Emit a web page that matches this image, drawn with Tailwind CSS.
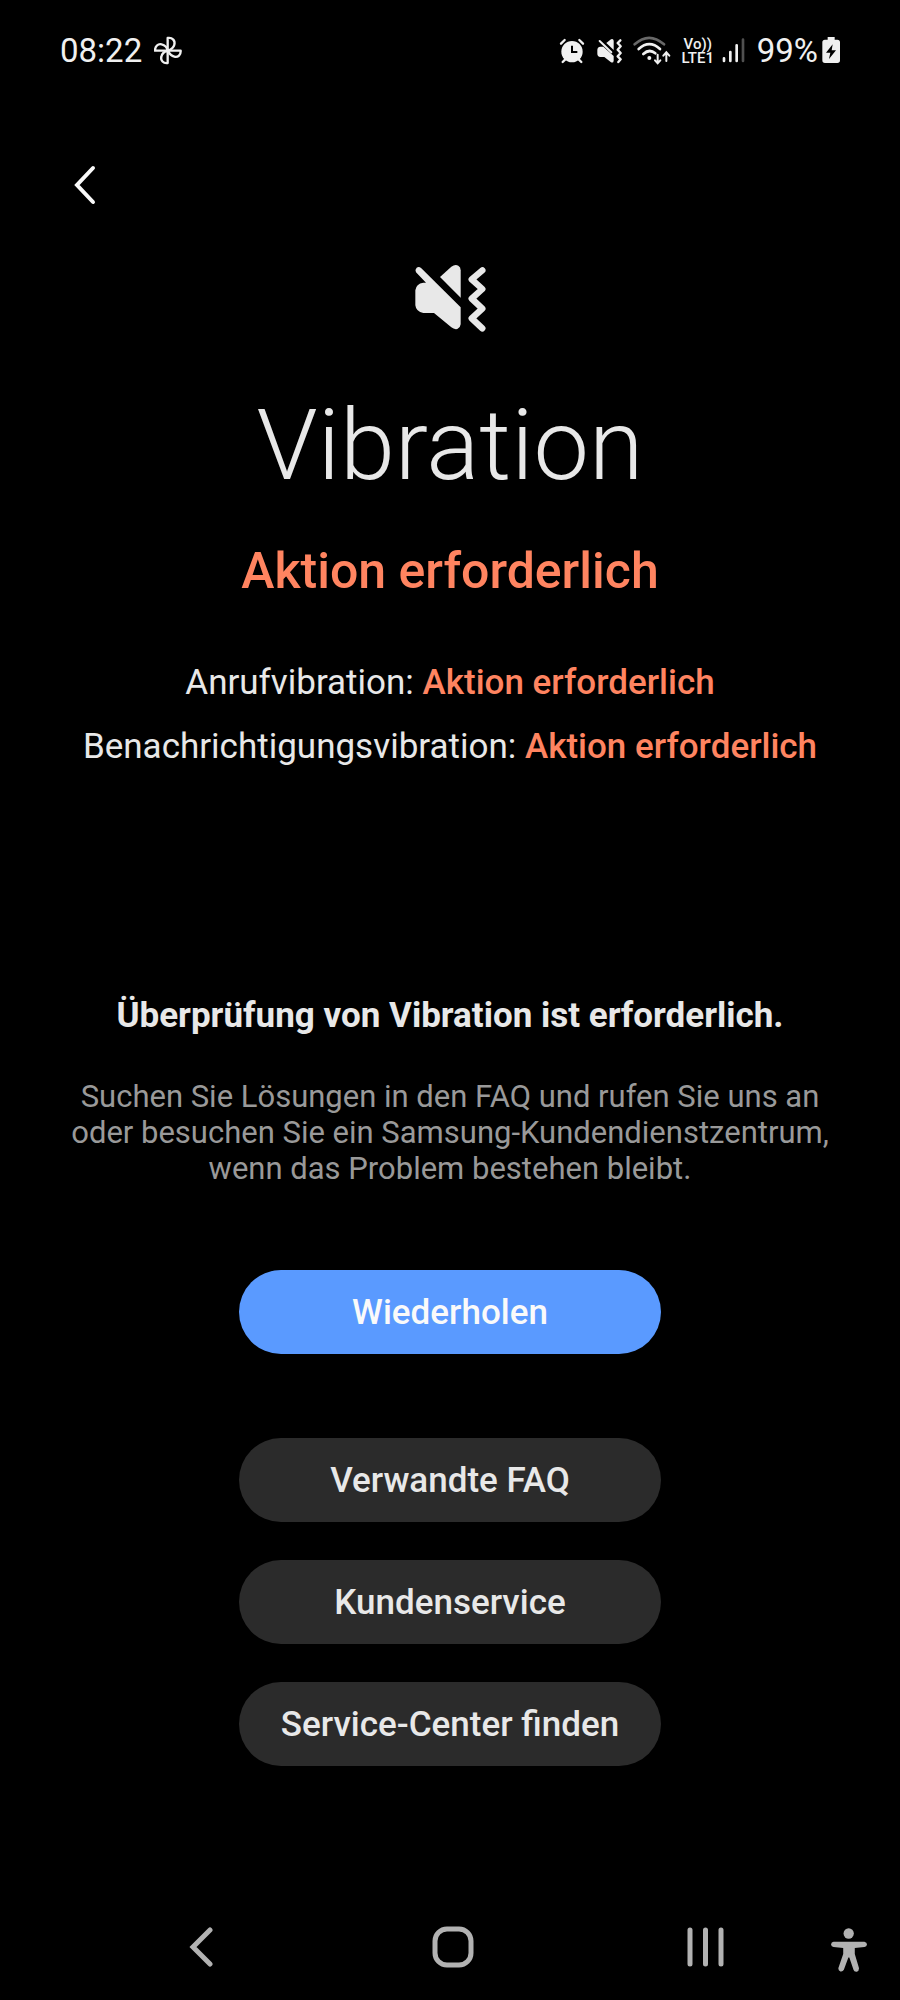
<!DOCTYPE html>
<html lang="de">
 <head>
  <meta charset="utf-8"/>
  <meta content="width=device-width, initial-scale=1.0" name="viewport"/>
  <title>
Vibration
  </title>
  <script src="https://cdn.jsdelivr.net/npm/@tailwindcss/browser@4"></script>
 </head>
 <body class="min-h-screen flex flex-col bg-black text-[#e8e8e8] font-[Roboto,sans-serif]">
  <!-- Status bar -->
  <div class="h-[102px] flex items-center justify-between px-[60px] text-[33px] leading-10 text-[#f0f0f0]">
   <div class="flex items-center gap-3">
    <span>08:22</span>
    <svg class="w-7 h-[30px]" fill="none" stroke="currentColor" stroke-linejoin="round" stroke-width="7" viewBox="342 48 84 90">
     <path d="M383 92V54C398 52 406 62 403 74C401 82 394 88 383 92"/>
     <path d="M383 92H422C423 104 414 113 403 110C394 108 388 101 383 92"/>
     <path d="M383 92V129C370 131 361 121 364 110C366 101 373 95 383 92"/>
     <path d="M383 92H345C345 79 354 70 365 73C375 75 381 82 383 92"/>
    </svg>
   </div>
   <div class="flex items-center">
    <svg class="w-[26px] h-[30px]" viewBox="57 48 78 90">
     <circle cx="96" cy="95" fill="currentColor" r="32"/>
     <path d="M63 71L74 60M129 71L118 60M68 126L76 118M124 126L116 118" fill="none" stroke="currentColor" stroke-linecap="round" stroke-width="7"/>
     <path d="M96 77V96H112" fill="none" stroke="#000" stroke-width="6"/>
    </svg>
    <svg class="ml-3 w-[25px] h-[30px]" viewBox="172 48 75 90">
     <path d="M200 69L214 58Q221 55 222 62V90Z" fill="currentColor"/>
     <path d="M182 80H191L222 108V122Q221 131 213 126L194 111H182Q173 110 173 101V90Q173 81 182 80Z" fill="currentColor"/>
     <path d="M180 63L215 97" stroke="currentColor" stroke-linecap="round" stroke-width="6"/>
     <path d="M242 61L234 69L243 79L234 89L243 99L234 109L243 118L236 126" fill="none" stroke="currentColor" stroke-linecap="round" stroke-linejoin="round" stroke-width="7"/>
    </svg>
    <svg class="ml-[11px] w-[39px] h-[30px]" fill="none" stroke="currentColor" stroke-linecap="round" stroke-width="8" viewBox="280 48 117 90">
     <path d="M285 73Q328 34 373 73" stroke="#686868"/>
     <path d="M297 87Q329 58 361 87"/>
     <path d="M311 102Q329 85 347 100"/>
     <circle cx="329" cy="114" fill="currentColor" r="6" stroke="none"/>
     <path d="M354 104V129M346 121L354 130L362 121M380 123V98M371 107L380 97L389 107" stroke-width="6"/>
    </svg>
    <div class="ml-2.5 w-8 flex flex-col items-center text-[15px] leading-[14px] font-medium">
     <span>Vo))</span>
     <span>LTE1</span>
    </div>
    <svg class="ml-2 w-6 h-[30px]" fill="none" stroke="currentColor" stroke-linecap="round" stroke-width="8" viewBox="94 48 72 90">
     <path d="M100 115V123M119 96V123M138 76V123"/>
     <path d="M157 59V123" stroke="#505050"/>
    </svg>
    <span class="ml-[11px]">99%</span>
    <svg class="ml-1 w-[18px] h-[30px]" viewBox="396 48 54 90">
     <path d="M413 51H434V59H442Q450 59 450 67V121Q450 129 442 129H405Q397 129 397 121V67Q397 59 405 59H413Z" fill="currentColor"/>
     <path d="M428 73L408 98H421L417 117L438 91H425Z" fill="#000"/>
    </svg>
   </div>
  </div>

  <header class="px-[58px] pt-14 pb-[52px]">
   <button aria-label="Zurück" class="flex items-center justify-center w-[54px] h-[54px]" type="button">
    <svg class="w-[22px] h-[40px]" fill="none" stroke="#fafafa" stroke-linecap="round" stroke-width="4" viewBox="0 0 22 40">
     <path d="M19 3L3 20L19 37"/>
    </svg>
   </button>
  </header>

  <main class="flex flex-col items-center px-4 text-center">
   <svg class="w-[72px] h-[72px]" viewBox="72 57 216 216">
    <path d="M150 96L184 65Q195 57 205 62Q212 66 212 76V158Z" fill="currentColor"/>
    <path d="M100 113H108L78 82Q74 74 80 68Q87 63 94 70L212 187V238Q211 248 202 252Q192 254 184 247L132 204H100Q78 200 76 181V136Q78 116 100 113Z" fill="currentColor"/>
    <path d="M277 76L245 103L277 132L245 161L277 191L245 220L277 250" fill="none" stroke="currentColor" stroke-linecap="round" stroke-linejoin="round" stroke-width="19"/>
   </svg>
   <h1 class="mt-[51px] text-[99px] leading-[116px] font-light">Vibration</h1>
   <p class="mt-[38px] text-[50px] leading-[60px] font-medium text-[#ff8460]">Aktion erforderlich</p>
   <div class="mt-[50px] text-[35px] leading-[64px]">
    <p>Anrufvibration: <span class="font-medium text-[#ff8460]">Aktion erforderlich</span></p>
    <p>Benachrichtigungsvibration: <span class="font-medium text-[#ff8460]">Aktion erforderlich</span></p>
   </div>
   <h2 class="mt-[217px] text-[35px] leading-10 font-bold">Überprüfung von Vibration ist erforderlich.</h2>
   <p class="mt-[43px] max-w-[770px] text-[31px] leading-9 text-[#999999]">Suchen Sie Lösungen in den FAQ und rufen Sie uns an oder besuchen Sie ein Samsung-Kundendienstzentrum, wenn das Problem bestehen bleibt.</p>
   <div class="mt-[83px] w-full max-w-[422px] flex flex-col text-[35px] leading-10 font-medium">
    <button class="h-[84px] rounded-full bg-[#5a9aff] pt-0.5 text-[#fafafa]" type="button">Wiederholen</button>
    <div class="mt-[84px] flex flex-col gap-[38px]">
     <button class="h-[84px] rounded-full bg-[#2b2b2b] pt-0.5" type="button">Verwandte FAQ</button>
     <button class="h-[84px] rounded-full bg-[#2b2b2b] pt-0.5" type="button">Kundenservice</button>
     <button class="h-[84px] rounded-full bg-[#2b2b2b] pt-0.5" type="button">Service-Center finden</button>
    </div>
   </div>
  </main>

  <!-- Navigation bar -->
  <nav class="mt-auto h-[106px] flex items-center pl-[75px] pr-[33px] text-[#b2b2b2]">
   <button aria-label="Zurück" class="flex-1 flex justify-center" type="button">
    <svg class="w-6 h-[42px]" fill="none" stroke="currentColor" stroke-linecap="round" stroke-width="5" viewBox="0 0 24 42">
     <path d="M21 4L4 21L21 38"/>
    </svg>
   </button>
   <button aria-label="Startseite" class="flex-1 flex justify-center" type="button">
    <svg class="w-[42px] h-[42px]" fill="none" stroke="currentColor" stroke-width="5" viewBox="0 0 42 42">
     <rect height="36" rx="12" width="36" x="3" y="3"/>
    </svg>
   </button>
   <button aria-label="Letzte Apps" class="flex-1 flex justify-center" type="button">
    <svg class="w-[38px] h-[42px]" fill="none" stroke="currentColor" stroke-linecap="round" stroke-width="5" viewBox="0 0 38 42">
     <path d="M4 4V38M19.500 4V38M35 4V38"/>
    </svg>
   </button>
   <button aria-label="Bedienungshilfen" class="flex justify-center" type="button">
    <svg class="w-9 h-[50px]" fill="currentColor" viewBox="509 68 112 150">
     <circle cx="564" cy="101" r="16"/>
     <path d="M517 127H613Q621 129 621 135Q620 142 613 143L583 146V165L596 208Q597 218 589 220Q581 221 579 214L566 176H563L549 214Q545 221 538 219Q531 216 532 208L547 165V146L517 143Q510 142 509 135Q510 128 517 127Z"/>
    </svg>
   </button>
  </nav>
 </body>
</html>
